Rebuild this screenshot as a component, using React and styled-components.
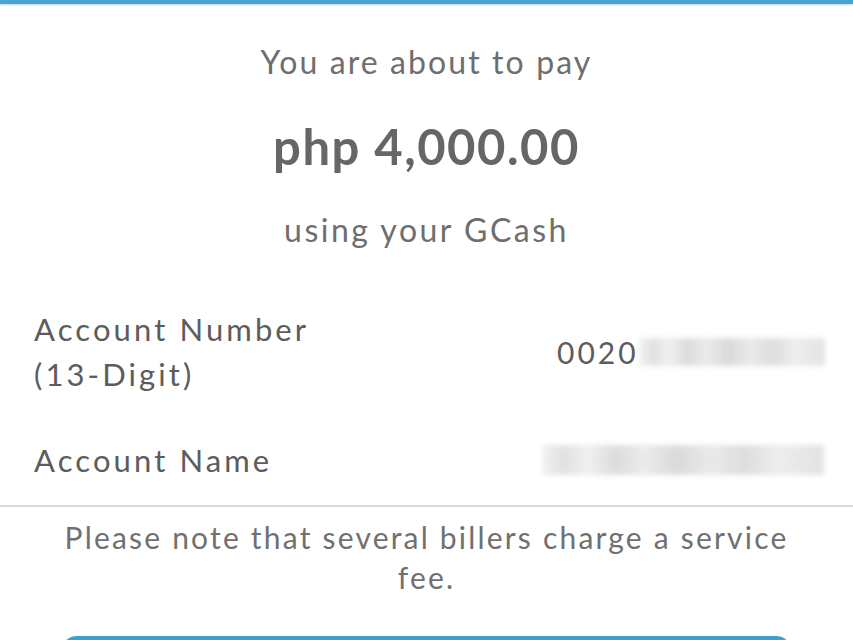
import React from "react";
import styled, { createGlobalStyle } from "styled-components";

const Global = createGlobalStyle`
  html, body { margin: 0; padding: 0; background: #fff; }
  body { font-family: Lato, "Open Sans", sans-serif; color: #6b6b6b; }
`;

const Page = styled.div`
  width: 853px;
  height: 640px;
  overflow: hidden;
  display: flex;
  flex-direction: column;
  background: #fff;
  & > * { flex-shrink: 0; }
`;

const TopBar = styled.div`
  height: 4px;
  background: #4aa3d3;
  box-shadow: 0 1px 2px rgba(74, 163, 211, 0.4);
`;

const Header = styled.div`
  display: flex;
  flex-direction: column;
  align-items: center;
  padding-top: 36px;
`;

const Lead = styled.div`
  font-size: 32px;
  line-height: 44px;
  color: #6e6e6e;
  letter-spacing: 2.1px;
`;

const Amount = styled.div`
  font-size: 49px;
  font-weight: 700;
  line-height: 56px;
  color: #666;
  letter-spacing: 1.5px;
  margin-top: 34px;
`;

const Using = styled(Lead)`
  margin-top: 34px;
  letter-spacing: 2.5px;
`;

const Details = styled.div`
  display: flex;
  flex-direction: column;
  gap: 23px;
  padding: 50px 28px 0 34px;
`;

const Row = styled.div`
  display: grid;
  grid-template-columns: ${(p) => p.$col}px 1fr;
  align-items: center;
  min-height: ${(p) => p.$h}px;
`;

const Label = styled.div`
  font-size: 31px;
  line-height: 45px;
  letter-spacing: 3.1px;
  color: #5c5c5c;
`;

const Value = styled.div`
  display: flex;
  align-items: center;
  font-size: 30px;
  letter-spacing: 3px;
  color: #5c5c5c;
`;

const Blur = styled.div`
  width: ${(p) => p.$w}px;
  height: ${(p) => p.$h}px;
  background: linear-gradient(
    90deg,
    #efefef 0%, #dcdcdc 8%, #eeeeee 16%, #d6d6d6 26%, #e8e8e8 36%,
    #d4d4d4 48%, #e6e6e6 60%, #d8d8d8 72%, #ebebeb 84%, #dedede 100%
  );
  filter: blur(2.5px);
  opacity: 0.85;
`;

const Divider = styled.div`
  height: 2px;
  background: #dadada;
  margin-top: 10px;
`;

const Note = styled.p`
  margin: 10px 40px 0;
  text-align: center;
  font-size: 30px;
  line-height: 40px;
  letter-spacing: 2.2px;
  color: #707070;
`;

const ButtonWrap = styled.div`
  padding: 39px 61px 0;
`;

const Button = styled.div`
  height: 60px;
  border-radius: 16px;
  background: #3aa0cf;
`;

export default function App() {
  return (
    <>
      <Global />
      <Page>
        <TopBar />
        <Header>
          <Lead>You are about to pay</Lead>
          <Amount>php 4,000.00</Amount>
          <Using>using your GCash</Using>
        </Header>
        <Details>
          <Row $h={100} $col={523}>
            <Label>
              Account Number
              <br />
              (13-Digit)
            </Label>
            <Value>
              0020
              <Blur $w={186} $h={28} />
            </Value>
          </Row>
          <Row $h={70} $col={508}>
            <Label>Account Name</Label>
            <Value>
              <Blur $w={282} $h={30} />
            </Value>
          </Row>
        </Details>
        <Divider />
        <Note>Please note that several billers charge a service fee.</Note>
        <ButtonWrap>
          <Button />
        </ButtonWrap>
      </Page>
    </>
  );
}
